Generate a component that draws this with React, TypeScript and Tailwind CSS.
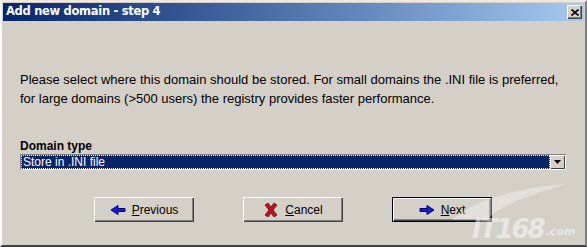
import React from "react"

function ArrowIcon({ dir }: { dir: "left" | "right" }) {
  return (
    <svg width="16" height="10" viewBox="0 0 16 10" className={dir === "right" ? "" : "-scale-x-100"}>
      <path d="M1 3.5 H8 V0.5 L15 5 L8 9.5 V6.5 H1 Z" fill="#1a1ad0" stroke="#00007a" strokeWidth="1" />
    </svg>
  )
}

function CancelIcon() {
  return (
    <svg width="16" height="16" viewBox="0 0 16 16">
      <path d="M2 3 L5 1 L8 5 L11 1 L14 3 L10 8 L14 13 L11 15 L8 11 L5 15 L2 13 L6 8 Z" fill="#b8141c" stroke="#7a0a0e" strokeWidth="0.8" />
    </svg>
  )
}

function WizButton({ icon, hot, rest, isDefault }: { icon: React.ReactNode; hot: string; rest: string; isDefault?: boolean }) {
  return (
    <button
      className={
        "w-[100px] h-[25px] flex items-center justify-center gap-[6px] bg-[#d4d0c8] text-[12px] text-black " +
        (isDefault
          ? "border border-black shadow-[inset_1px_1px_0_#fff,inset_-1px_-1px_0_#404040,inset_-2px_-2px_0_#808080]"
          : "shadow-[inset_1px_1px_0_#fff,inset_-1px_-1px_0_#404040,inset_-2px_-2px_0_#808080]")
      }
    >
      {icon}
      <span>
        <span className="underline">{hot}</span>
        {rest}
      </span>
    </button>
  )
}

export default function App() {
  return (
    <div className="w-[587px] h-[247px] overflow-hidden relative bg-[#d4d0c8] border-t-2 border-l-2 border-t-[#ece9e1] border-l-[#ffffff] border-r-2 border-b-2 border-r-[#808080] border-b-[#404040] flex flex-col font-['Liberation_Sans',Arial,sans-serif]">
      {/* title bar */}
      <div className="mx-[1px] mt-[1px] h-[18px] flex items-center justify-between bg-gradient-to-r from-[#0a246a] to-[#a6caf0] pl-[3px] pr-[2px]">
        <span className="text-white font-bold text-[11.5px] font-['DejaVu_Sans',Verdana,sans-serif] tracking-[-0.3px]">Add new domain - step 4</span>
        <div className="w-[15px] h-[14px] bg-[#d4d0c8] flex items-center justify-center shadow-[inset_1px_1px_0_#fff,inset_-1px_-1px_0_#404040,inset_-2px_-2px_0_#808080]">
          <svg width="8" height="7" viewBox="0 0 8 7">
            <path d="M0.5 0.5 L7.5 6.5 M7.5 0.5 L0.5 6.5" stroke="#000" strokeWidth="1.6" />
          </svg>
        </div>
      </div>

      {/* body */}
      <div className="flex flex-col pl-[18px] pr-[18px] pt-[49px]">
        <p className="text-[13px] leading-[19px] text-black">
          Please select where this domain should be stored. For small domains the .INI file is preferred,
          <br />
          for large domains (&gt;500 users) the registry provides faster performance.
        </p>

        <div className="mt-[30px] text-[12px] font-bold text-black leading-[16px]">Domain type</div>
        <div className="mt-[0px] w-[546px] h-[16px] flex items-stretch bg-white shadow-[inset_1px_1px_0_#808080,inset_-1px_-1px_0_#fff]">
          <div className="flex-1 m-[1px] mr-0 bg-[#0a246a] outline-1 outline-dotted outline-[#ffffff] -outline-offset-1 flex items-center pl-[2px] text-white text-[12px] leading-none">
            Store in .INI file
          </div>
          <div className="w-[15px] my-[1px] mr-[1px] bg-[#d4d0c8] flex items-center justify-center shadow-[inset_1px_1px_0_#fff,inset_-1px_-1px_0_#404040]">
            <svg width="7" height="4" viewBox="0 0 7 4">
              <path d="M0 0 H7 L3.5 4 Z" fill="#000" />
            </svg>
          </div>
        </div>

        <div className="mt-[27px] flex gap-[49px] pl-[74px]">
          <WizButton icon={<ArrowIcon dir="left" />} hot="P" rest="revious" />
          <WizButton icon={<CancelIcon />} hot="C" rest="ancel" />
          <WizButton icon={<ArrowIcon dir="right" />} hot="N" rest="ext" isDefault />
        </div>
      </div>

      {/* watermark */}
      <svg className="absolute left-[430px] top-[180px] pointer-events-none" width="140" height="40" viewBox="0 0 140 40">
        <path d="M20 38 C40 20 80 6 135 2 C100 12 70 22 55 38 Z" fill="#ffffff" fillOpacity="0.35" />
      </svg>
      <div className="absolute left-[470px] top-[213px] pointer-events-none select-none flex items-end text-[#ffffff]/50 italic font-bold font-['DejaVu_Sans',sans-serif]">
        <span className="text-[26px] leading-[28px] tracking-[-2px]">IT168</span>
        <span className="text-[11px] mb-[5px] ml-[2px] leading-[13px]">.com</span>
      </div>
    </div>
  )
}
